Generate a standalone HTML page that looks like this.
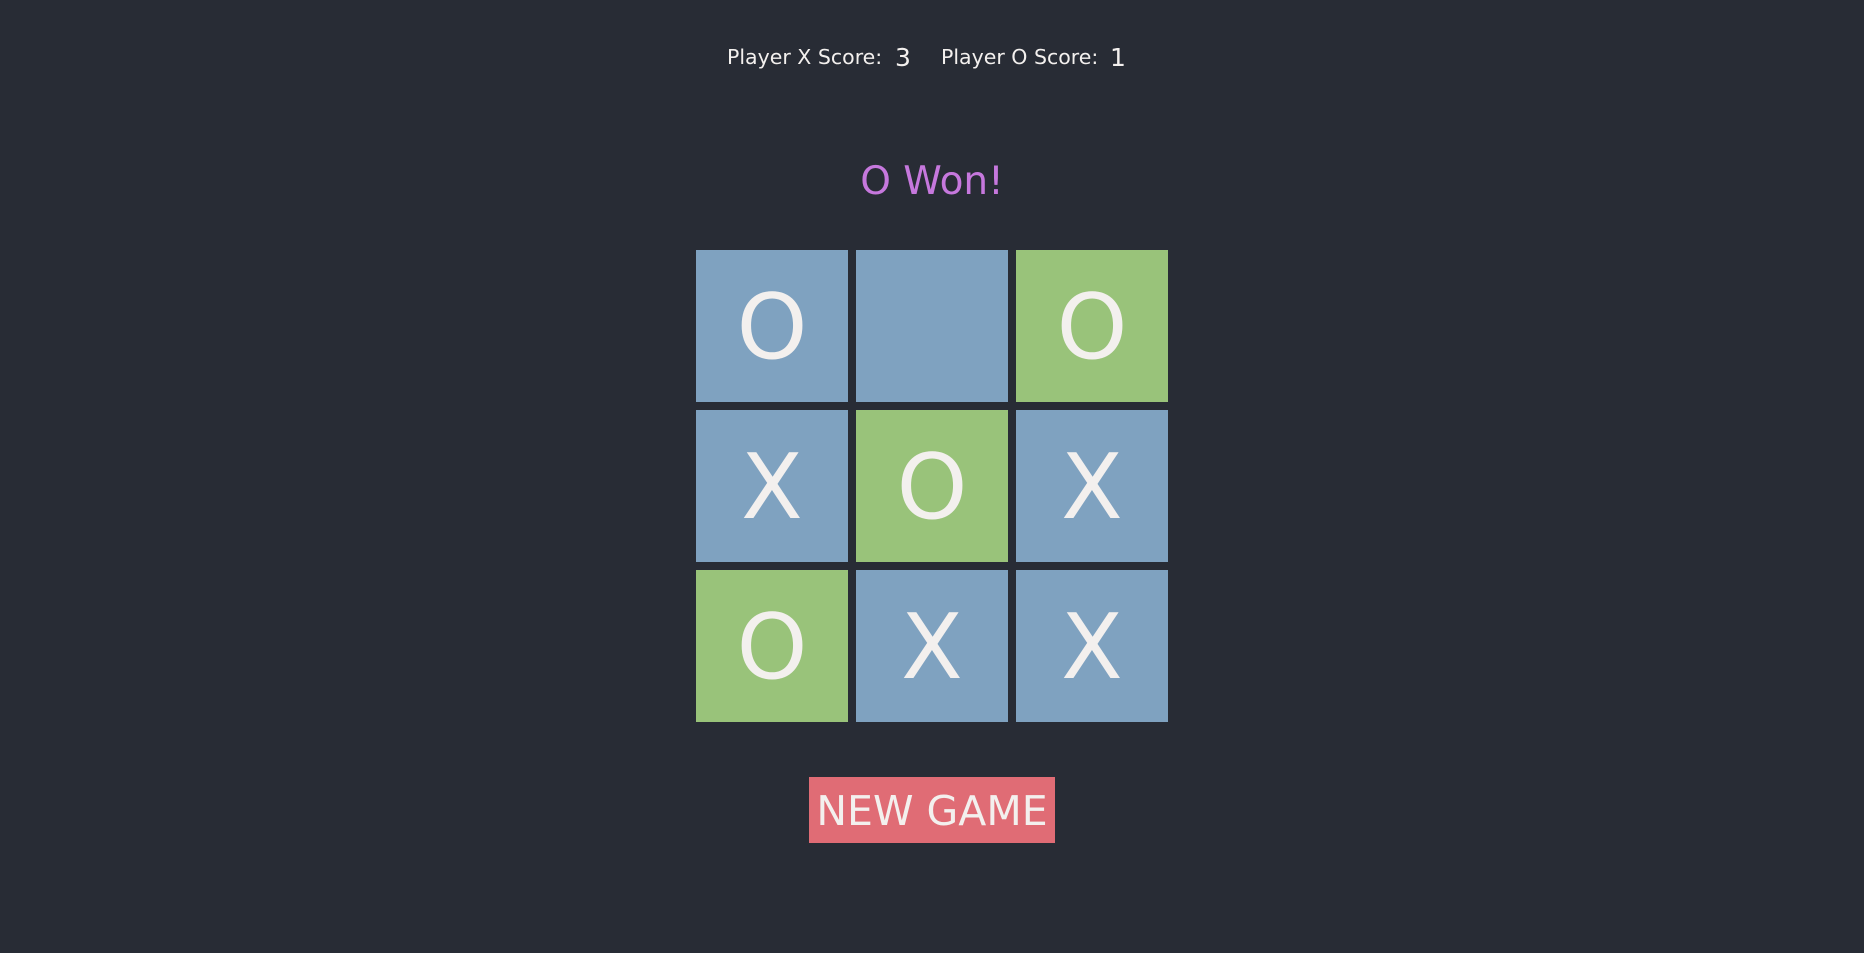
<!DOCTYPE html>
<html><head><meta charset="utf-8"><style>
html,body{margin:0;padding:0;background:#282c35;width:1864px;height:953px;overflow:hidden;font-family:"DejaVu Sans","Liberation Sans",sans-serif;color:#f3f0ee}
.t{position:absolute;white-space:nowrap;line-height:1}
.cell{position:absolute;width:152px;height:152px;display:flex;align-items:center;justify-content:center;font-size:90px;color:#f3f0ee;padding-top:2px;box-sizing:border-box}
.b{background:#7fa2c0}.g{background:#99c37a}
</style></head><body>
<div class="t" style="left:727px;top:47px;font-size:20.5px">Player X Score:</div>
<div class="t" style="left:895px;top:45px;font-size:25px">3</div>
<div class="t" style="left:941px;top:47px;font-size:20.5px">Player O Score:</div>
<div class="t" style="left:1110px;top:45px;font-size:25px">1</div>
<div class="t" style="left:0;width:1864px;text-align:center;top:162px;font-size:39px;color:#c678dd">O Won!</div>
<div class="cell b" style="left:696px;top:250px">O</div>
<div class="cell b" style="left:856px;top:250px"></div>
<div class="cell g" style="left:1016px;top:250px">O</div>
<div class="cell b" style="left:696px;top:410px">X</div>
<div class="cell g" style="left:856px;top:410px">O</div>
<div class="cell b" style="left:1016px;top:410px">X</div>
<div class="cell g" style="left:696px;top:570px">O</div>
<div class="cell b" style="left:856px;top:570px">X</div>
<div class="cell b" style="left:1016px;top:570px">X</div>
<div style="position:absolute;left:809px;top:777px;width:246px;height:66px;background:#e06c75;display:flex;align-items:center;justify-content:center;font-size:41px;color:#f3f0ee;padding-top:2px;box-sizing:border-box">NEW GAME</div>
</body></html>
